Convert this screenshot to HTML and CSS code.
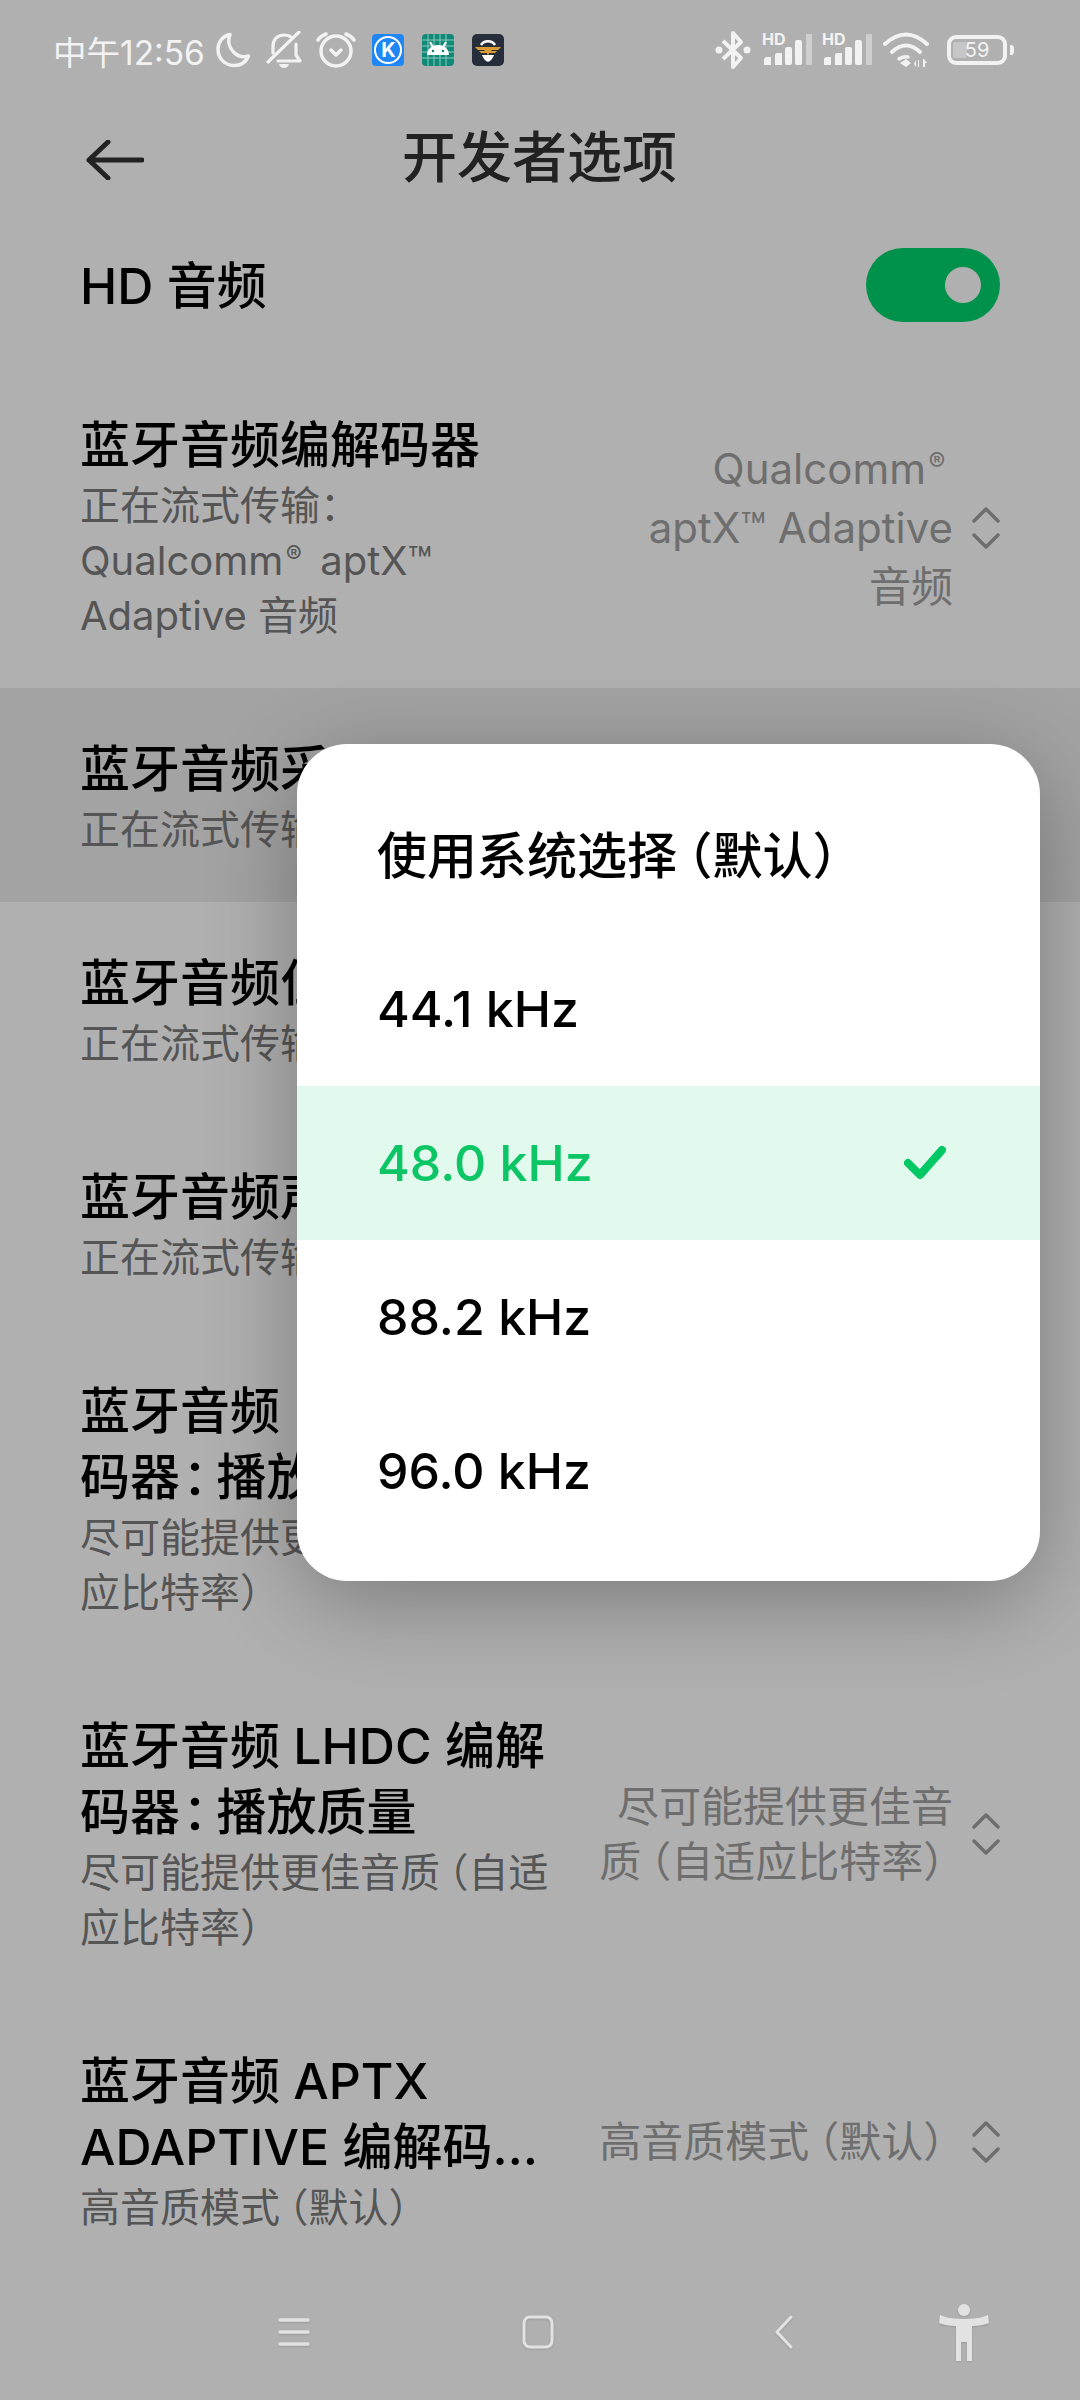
FILE: index.html
```html
<!DOCTYPE html>
<html lang="zh-CN">
<head>
  <meta charset="UTF-8">
  <meta name="viewport" content="width=device-width, initial-scale=1.0">
  <title>开发者选项</title>
  <link rel="stylesheet" href="styles.css">
</head>
<body>
  <div class="statusbar">
    <div class="status-left">
      <span class="time">中午12:56</span>
      <svg class="st-icon" width="34" height="36" viewBox="0 0 34 36"><path d="M14 2.500C6.500 4 2 10 2 17.500 2 26.500 9 33.500 18 33.500c6.500 0 12-3.500 14.500-9.500C27 25.500 22 24.500 18 20.500 13 15.500 11.500 8.500 14 2.500z" fill="none" stroke="#f2f2f2" stroke-width="3.500" stroke-linejoin="round"/></svg>
      <svg class="st-icon gap-bell" width="36" height="38" viewBox="0 0 36 38"><g fill="none" stroke="#f2f2f2" stroke-width="3.200" stroke-linecap="round" stroke-linejoin="round"><path d="M25 6c-2-1.500-4.500-2-7-2C11 4 7 9 7 15v7"/><path d="M30 13v11l4 6H12"/><path d="M33 1 2 31"/></g><path d="M13 33h10c-1 3-3 4-5 4s-4-1-5-4z" fill="#f2f2f2"/></svg>
      <svg class="st-icon gap-alarm" width="40" height="36" viewBox="0 0 40 36"><g fill="none" stroke="#f2f2f2" stroke-width="3.500" stroke-linecap="round" stroke-linejoin="round"><circle cx="20" cy="19" r="15"/><path d="M15 18l5 5 5-5"/><path d="M2 8c2-3 5-5 8-6M38 8c-2-3-5-5-8-6"/></g></svg>
      <svg class="st-app gap-k" width="32" height="32" viewBox="0 0 32 32"><rect width="32" height="32" rx="4" fill="#1f86f5"/><circle cx="16" cy="16" r="13" fill="none" stroke="#fff" stroke-width="2"/><text x="16.500" y="23" class="app-k">K</text></svg>
      <svg class="st-app gap-app" width="32" height="32" viewBox="0 0 32 32"><rect width="32" height="32" rx="4" fill="#0f8a78"/><path d="M0 6h32M0 12h32M0 18h32M0 24h32M6 0v32M12 0v32M18 0v32M24 0v32" stroke="#8cc8ba" stroke-width="1"/><path d="M5 21c0-6 5-10 11-10s11 4 11 10z" fill="#fff"/><path d="M8 8l3 5M24 8l-3 5" stroke="#fff" stroke-width="2"/><circle cx="11" cy="17" r="1.300" fill="#0f8a78"/><circle cx="21" cy="17" r="1.300" fill="#0f8a78"/></svg>
      <svg class="st-app gap-app" width="32" height="32" viewBox="0 0 32 32"><rect width="32" height="32" rx="5" fill="#272e3b"/><path d="M9 11c3-5 11-5 14 0" fill="none" stroke="#fff" stroke-width="2.500"/><path d="M10 21c2 5 4 6 6 7 2-1 4-2 6-7z" fill="#fff"/><path d="M3 13h26l-3 3h-6l-4 5-4-5H6z" fill="#d99b32"/><path d="M7 17h18l-2 2H9z" fill="#d99b32"/></svg>
    </div>
    <div class="status-right">
      <svg width="36" height="40" viewBox="0 0 36 40"><path d="M8 11l18 17-8 9V3l8 9L8 29" fill="none" stroke="#f2f2f2" stroke-width="4" stroke-linejoin="round"/><circle cx="4" cy="20" r="3.500" fill="#f2f2f2"/><circle cx="32" cy="20" r="3.500" fill="#f2f2f2"/></svg>
      <svg class="signal gap-sig" width="50" height="36" viewBox="0 0 50 36"><text x="0" y="13" class="sig-hd">HD</text><g fill="#f2f2f2"><path d="M2 33v-5q0-3 3-3h4v8z"/><path d="M13 33v-10q0-2 2-2h5v12z"/><rect x="23" y="15" width="7" height="18" rx="2"/><rect x="33" y="8" width="7" height="25" rx="2"/></g><rect x="44" y="2" width="6" height="31" rx="1" fill="#cfcfcf"/></svg>
      <svg class="signal gap-sig2" width="50" height="36" viewBox="0 0 50 36"><text x="0" y="13" class="sig-hd">HD</text><g fill="#f2f2f2"><path d="M2 33v-5q0-3 3-3h4v8z"/><path d="M13 33v-10q0-2 2-2h5v12z"/><rect x="23" y="15" width="7" height="18" rx="2"/><rect x="33" y="8" width="7" height="25" rx="2"/></g><rect x="44" y="2" width="6" height="31" rx="1" fill="#cfcfcf"/></svg>
      <svg class="gap-wifi" width="46" height="36" viewBox="0 0 46 36"><g fill="none" stroke="#f2f2f2" stroke-linecap="round"><path d="M2 12Q23-7 44 12" stroke-width="4"/><path d="M9 20Q23 7 37 20" stroke-width="4"/><path d="M16 27Q20 24 25 25" stroke-width="3.500"/></g><path d="M17 31l6-4 5 4-5 4z" fill="#f2f2f2"/><path d="M33 28l-2 4 2 3zM35 28v7h1v-7zM41 27l3 4h-2v4h-2v-8z" fill="#f2f2f2"/></svg>
      <div class="battery">
        <span class="battery-fill"></span>
        <span class="battery-num">59</span>
      </div>
      <span class="battery-nub"></span>
    </div>
  </div>

  <div class="toolbar">
    <svg class="back" width="58" height="40" viewBox="0 0 58 40"><path d="M56 20H3M22 2 3 20l19 18" fill="none" stroke="#222" stroke-width="5" stroke-linecap="round" stroke-linejoin="round"/></svg>
    <h1>开发者选项</h1>
  </div>

  <div class="switch-row">
    <span class="switch-label">HD 音频</span>
    <span class="toggle"><span class="knob"></span></span>
  </div>

  <div class="row">
    <div class="row-text">
      <div class="row-title">蓝牙音频编解码器</div>
      <div class="row-sub">正在流式传输：<br>Qualcomm<span class="mark">®</span> aptX™<br>Adaptive 音频</div>
    </div>
    <div class="row-value tall">Qualcomm<span class="mark">®</span><br>aptX™ Adaptive<br>音频</div>
    <svg class="updown" width="28" height="42" viewBox="0 0 28 42"><path d="M2 14 14 2l12 12M2 28l12 12 12-12" fill="none" stroke="#6e6e6e" stroke-width="3.500" stroke-linecap="round" stroke-linejoin="round"/></svg>
  </div>

  <div class="row active">
    <div class="row-text">
      <div class="row-title">蓝牙音频采</div>
      <div class="row-sub">正在流式传输</div>
    </div>
  </div>

  <div class="row">
    <div class="row-text">
      <div class="row-title">蓝牙音频位</div>
      <div class="row-sub">正在流式传输</div>
    </div>
  </div>

  <div class="row">
    <div class="row-text">
      <div class="row-title">蓝牙音频声</div>
      <div class="row-sub">正在流式传输</div>
    </div>
  </div>

  <div class="row">
    <div class="row-text">
      <div class="row-title">蓝牙音频<br>码器<span class="cn">：</span>播放</div>
      <div class="row-sub">尽可能提供更<br>应比特率<span class="tg">）</span></div>
    </div>
  </div>

  <div class="row">
    <div class="row-text">
      <div class="row-title">蓝牙音频 LHDC 编解<br>码器<span class="cn">：</span>播放质量</div>
      <div class="row-sub">尽可能提供更佳音<span class="tg">质</span>（自适<br>应比特率<span class="tg">）</span></div>
    </div>
    <div class="row-value">尽可能提供更佳音<br><span class="tg">质</span>（自适应比特率<span class="tg">）</span></div>
    <svg class="updown" width="28" height="42" viewBox="0 0 28 42"><path d="M2 14 14 2l12 12M2 28l12 12 12-12" fill="none" stroke="#6e6e6e" stroke-width="3.500" stroke-linecap="round" stroke-linejoin="round"/></svg>
  </div>

  <div class="row">
    <div class="row-text">
      <div class="row-title">蓝牙音频 APTX<br>ADAPTIVE 编解码…</div>
      <div class="row-sub">高音质模<span class="tg">式</span>（默认<span class="tg">）</span></div>
    </div>
    <div class="row-value">高音质模<span class="tg">式</span>（默认<span class="tg">）</span></div>
    <svg class="updown" width="28" height="42" viewBox="0 0 28 42"><path d="M2 14 14 2l12 12M2 28l12 12 12-12" fill="none" stroke="#6e6e6e" stroke-width="3.500" stroke-linecap="round" stroke-linejoin="round"/></svg>
  </div>

  <div class="navbar">
    <svg class="nav-menu" width="32" height="32" viewBox="0 0 32 32"><path d="M2 4h28M2 16h28M2 28h28" stroke="#e2e2e2" stroke-width="3.500" stroke-linecap="round"/></svg>
    <svg class="nav-home" width="32" height="34" viewBox="0 0 32 34"><rect x="2" y="2" width="28" height="30" rx="6" fill="none" stroke="#e2e2e2" stroke-width="3"/></svg>
    <svg class="nav-back" width="18" height="34" viewBox="0 0 18 34"><path d="M16 2 2 17l14 15" fill="none" stroke="#e2e2e2" stroke-width="3" stroke-linecap="round" stroke-linejoin="round"/></svg>
    <svg class="nav-person" width="50" height="57" viewBox="0 0 50 57"><g fill="#e2e2e2"><ellipse cx="25" cy="6" rx="6" ry="6"/><path d="M1 11c7 3 15 4 24 4s17-1 24-4l1 8c-5 2-11 3-17 3v35h-5V38h-6v19h-5V22c-6 0-12-1-17-3z"/></g></svg>
  </div>

  <div class="popup">
    <div class="popup-item cjk"><span>使用系统选<span class="tg">择</span>（默认<span class="tg">）</span></span></div>
    <div class="popup-item">44.1 kHz</div>
    <div class="popup-item selected">
      <span>48.0 kHz</span>
      <svg width="42" height="34" viewBox="0 0 42 34"><path d="M4 17l12 12L38 4" fill="none" stroke="#00c864" stroke-width="8" stroke-linecap="round" stroke-linejoin="round"/></svg>
    </div>
    <div class="popup-item">88.2 kHz</div>
    <div class="popup-item">96.0 kHz</div>
  </div>
</body>
</html>
```

FILE: styles.css
```css
html, body { margin: 0; padding: 0; }
body {
  width: 1080px;
  height: 2400px;
  overflow: hidden;
  position: relative;
  background: #b0b0b0;
  font-family: Inter, "Noto Sans CJK SC", sans-serif;
  display: flex;
  flex-direction: column;
}

/* status bar */
.statusbar { height: 100px; flex: none; display: flex; justify-content: space-between; align-items: center; padding: 0 66px 0 53px; }
.status-left, .status-right { display: flex; align-items: center; }
.time { color: #f2f2f2; font-size: 33.5px; width: 163px; white-space: nowrap; }
.st-icon { display: block; }
.gap-bell { margin-left: 16px; }
.gap-alarm { margin-left: 14px; }
.gap-k { margin-left: 16px; }
.gap-app { margin-left: 18px; }
.app-k { font: 700 20px Inter, sans-serif; fill: #fff; text-anchor: middle; }
.signal { overflow: visible; }
.sig-hd { font: 700 16px Inter, sans-serif; fill: #f2f2f2; }
.gap-sig { margin-left: 11px; }
.gap-sig2 { margin-left: 10px; }
.gap-wifi { margin-left: 11px; }
.battery { position: relative; margin-left: 18px; width: 60px; height: 30px; box-sizing: border-box; border: 4px solid #f2f2f2; border-radius: 9px; display: flex; align-items: center; justify-content: center; }
.battery-fill { position: absolute; left: 2px; top: 3px; bottom: 3px; width: 14px; background: #c6c6c6; border-radius: 2px; }
.battery-num { position: relative; color: #f2f2f2; font-size: 20px; line-height: 22px; }
.battery-nub { width: 4px; height: 10px; margin-left: 3px; background: #f2f2f2; border-radius: 0 3px 3px 0; }

/* toolbar */
.toolbar { height: 106px; flex: none; display: flex; align-items: center; padding-left: 86px; }
.toolbar h1 { margin: 0 0 0 258px; font-size: 55px; font-weight: 500; color: #222; }
.back { display: block; margin-top: 14px; }

/* rows */
.switch-row { height: 158px; flex: none; display: flex; align-items: center; justify-content: space-between; box-sizing: border-box; padding: 0 80px 0 80px; }
.switch-label { font-size: 50px; font-weight: 500; color: #000; margin-top: -6px; }
.toggle { width: 134px; height: 74px; border-radius: 37px; background: #00914a; display: flex; align-items: center; justify-content: flex-end; padding-right: 19px; box-sizing: border-box; }
.knob { width: 36px; height: 36px; border-radius: 50%; background: #b0b0b0; }

.row { flex: none; display: flex; align-items: center; padding: 48px 80px 45px 80px; }
.row.active { background: #a3a3a3; }
.row-text { flex: 1; min-width: 0; }
.row-title { font-size: 50px; font-weight: 500; line-height: 66px; color: #000; white-space: nowrap; }
.row-sub { font-size: 40px; line-height: 55px; color: #555; white-space: nowrap; }
.row-value { font-size: 42px; line-height: 55px; color: #6e6e6e; text-align: right; white-space: nowrap; margin-right: 19px; }
.row-value.tall { line-height: 59px; }
.updown { display: block; flex: none; }

/* tighter CJK punctuation and small marks */
.tg { letter-spacing: -0.29em; }
.cn { margin-left: 0.05em; letter-spacing: -0.32em; }
.mark { font-size: 0.6em; line-height: 0; vertical-align: 0.5em; margin: 0 0.3em 0 0.1em; }

/* bottom navigation */
.navbar { position: absolute; left: 0; right: 0; bottom: 0; height: 136px; display: flex; align-items: center; padding-left: 278px; }
.navbar svg { filter: drop-shadow(0 1px 1px rgba(0, 0, 0, 0.12)); }
.nav-home { margin-left: 212px; }
.nav-back { margin-left: 221px; }
.nav-person { margin-left: 146px; }

/* list popup */
.popup {
  position: absolute;
  left: 297px;
  top: 744px;
  width: 743px;
  height: 837px;
  box-sizing: border-box;
  padding: 34px 0 33px;
  background: #fff;
  border-radius: 50px;
  box-shadow: 0 20px 90px rgba(0, 0, 0, 0.3);
}
.popup-item { height: 154px; display: flex; align-items: center; justify-content: space-between; padding: 0 94px 0 80px; font-size: 50px; font-weight: 500; color: #000; white-space: nowrap; }
.popup-item.cjk { padding-bottom: 6px; height: 148px; }
.popup-item.selected { background: #e2f9ee; color: #0cc666; }
```
